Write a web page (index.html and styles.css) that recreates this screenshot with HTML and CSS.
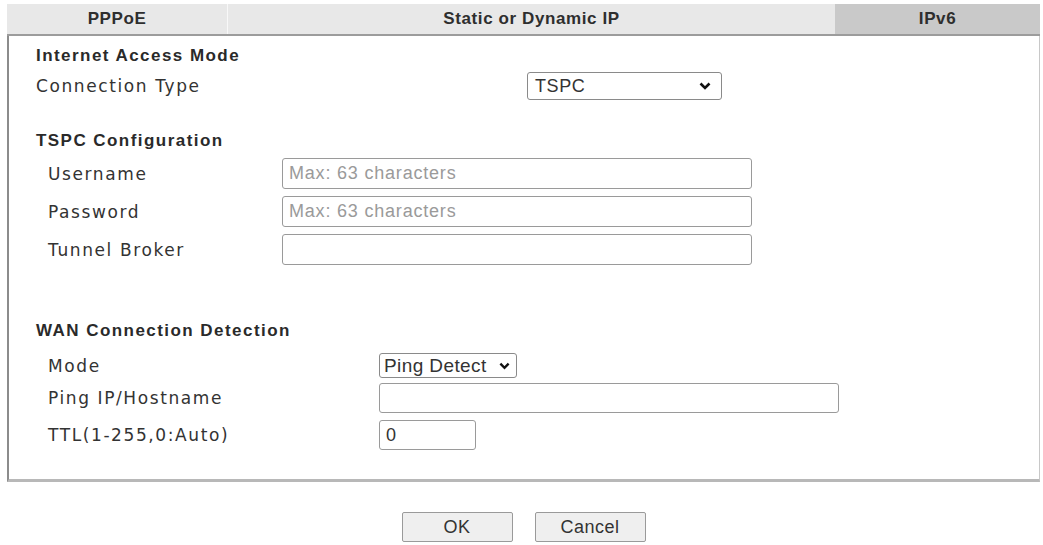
FILE: index.html
```html
<!DOCTYPE html>
<html lang="en">
<head>
    <meta charset="UTF-8">
    <title>WAN - IPv6</title>
    <link rel="stylesheet" href="styles.css">
</head>
<body>
    <div class="page">
        <div class="tabs">
            <div class="tab tab-pppoe">PPPoE</div>
            <div class="tab tab-static">Static or Dynamic IP</div>
            <div class="tab tab-ipv6 active">IPv6</div>
        </div>
        <div class="panel">
            <div class="section-title first">Internet Access Mode</div>
            <div class="row row-mode">
                <label class="label wide">Connection Type</label>
                <div class="select select-type">
                    <span>TSPC</span>
                    <svg class="chevron" viewBox="0 0 12 8" width="12" height="8"><path d="M1.5 1.5 L6 6 L10.5 1.5" fill="none" stroke="#111" stroke-width="2.6"/></svg>
                </div>
            </div>

            <div class="section-title tspc">TSPC Configuration</div>
            <div class="rows tspc-rows">
                <div class="row">
                    <label class="label sub tspc-label">Username</label>
                    <input class="field field-long" type="text" placeholder="Max: 63 characters">
                </div>
                <div class="row">
                    <label class="label sub tspc-label">Password</label>
                    <input class="field field-long" type="text" placeholder="Max: 63 characters">
                </div>
                <div class="row">
                    <label class="label sub tspc-label">Tunnel Broker</label>
                    <input class="field field-long" type="text">
                </div>
            </div>

            <div class="section-title wan">WAN Connection Detection</div>
            <div class="row row-detect">
                <label class="label sub wan-label">Mode</label>
                <div class="select select-ping">
                    <span>Ping Detect</span>
                    <svg class="chevron" viewBox="0 0 12 8" width="11" height="8"><path d="M1.5 1.5 L6 6 L10.5 1.5" fill="none" stroke="#111" stroke-width="2.6"/></svg>
                </div>
            </div>
            <div class="row row-host">
                <label class="label sub wan-label">Ping IP/Hostname</label>
                <input class="field field-host" type="text">
            </div>
            <div class="row row-ttl">
                <label class="label sub wan-label">TTL(1-255,0:Auto)</label>
                <input class="field field-ttl" type="text" value="0">
            </div>
        </div>
        <div class="buttons">
            <button class="btn">OK</button>
            <button class="btn">Cancel</button>
        </div>
    </div>
</body>
</html>
```

FILE: styles.css
```css
body {
    margin: 0;
    background: #fff;
    font-family: "Liberation Sans", Arial, sans-serif;
    color: #333;
}
.page {
    padding: 4px 3px 0 7px;
}
.tabs {
    display: flex;
    height: 30px;
    border-bottom: 2px solid #9c9c9c;
}
.tab {
    display: flex;
    align-items: center;
    justify-content: center;
    background: #e8e8e8;
    font-weight: bold;
    font-size: 17px;
    letter-spacing: 0.6px;
    color: #2e2e2e;
}
.tab-pppoe {
    width: 220px;
    border-right: 1px solid #f8f8f8;
}
.tab-static {
    width: 607px;
}
.tab-ipv6 {
    flex: 1;
}
.tab.active {
    background: #c9c9c9;
}
.panel {
    border-left: 2px solid #8c8c8c;
    border-right: 1px solid #c8c8c8;
    border-bottom: 3px solid #b8b8b8;
    padding: 9px 0 29px 27px;
}
.section-title {
    font-weight: bold;
    font-size: 17px;
    letter-spacing: 1.45px;
    line-height: 22px;
    height: 22px;
    color: #2a2a2a;
}
.section-title.tspc {
    margin-top: 28px;
}
.section-title.wan {
    margin-top: 55px;
}
.row {
    display: flex;
    align-items: center;
}
.row-mode {
    margin-top: 3px;
    height: 32px;
}
.rows {
    display: grid;
    row-gap: 7px;
    margin-top: 6px;
}
.label {
    font-family: "DejaVu Sans", Verdana, sans-serif;
    font-size: 17px;
    letter-spacing: 1.6px;
    line-height: 22px;
    color: #333;
    flex-shrink: 0;
}
.label.sub {
    padding-left: 12px;
}
.label.wide {
    width: 491px;
}
.tspc-label {
    width: 234px;
}
.wan-label {
    width: 331px;
}
.select {
    box-sizing: border-box;
    display: flex;
    align-items: center;
    justify-content: space-between;
    border: 1px solid #8a8a8a;
    border-radius: 3px;
    background: #fff;
    font-size: 18px;
    letter-spacing: 0.6px;
    color: #333;
}
.select-type {
    width: 195px;
    height: 28px;
    padding: 0 10px 0 7px;
}
.select-ping {
    width: 138px;
    height: 25px;
    padding: 0 6px 0 4px;
    font-size: 19px;
    letter-spacing: 0.4px;
}
.field {
    box-sizing: border-box;
    border: 1px solid #9a9a9a;
    border-radius: 3px;
    background: #fff;
    font-family: "Liberation Sans", Arial, sans-serif;
    font-size: 18px;
    letter-spacing: 0.8px;
    color: #333;
    padding: 0 6px;
    margin: 0;
    outline: none;
}
.field::placeholder {
    color: #9a9a9a;
}
.field-long {
    width: 470px;
    height: 31px;
}
.row-detect {
    margin-top: 11px;
}
.row-host {
    margin-top: 5px;
}
.row-ttl {
    margin-top: 7px;
}
.field-host {
    width: 460px;
    height: 30px;
}
.field-ttl {
    width: 97px;
    height: 30px;
}
.buttons {
    display: flex;
    justify-content: center;
    gap: 22px;
    margin-top: 30px;
}
.btn {
    width: 111px;
    height: 30px;
    border: 1px solid #9a9a9a;
    border-radius: 2px;
    background: #efefef;
    font-family: "Liberation Sans", Arial, sans-serif;
    font-size: 18px;
    letter-spacing: 0.5px;
    color: #333;
    padding: 0;
}
```
